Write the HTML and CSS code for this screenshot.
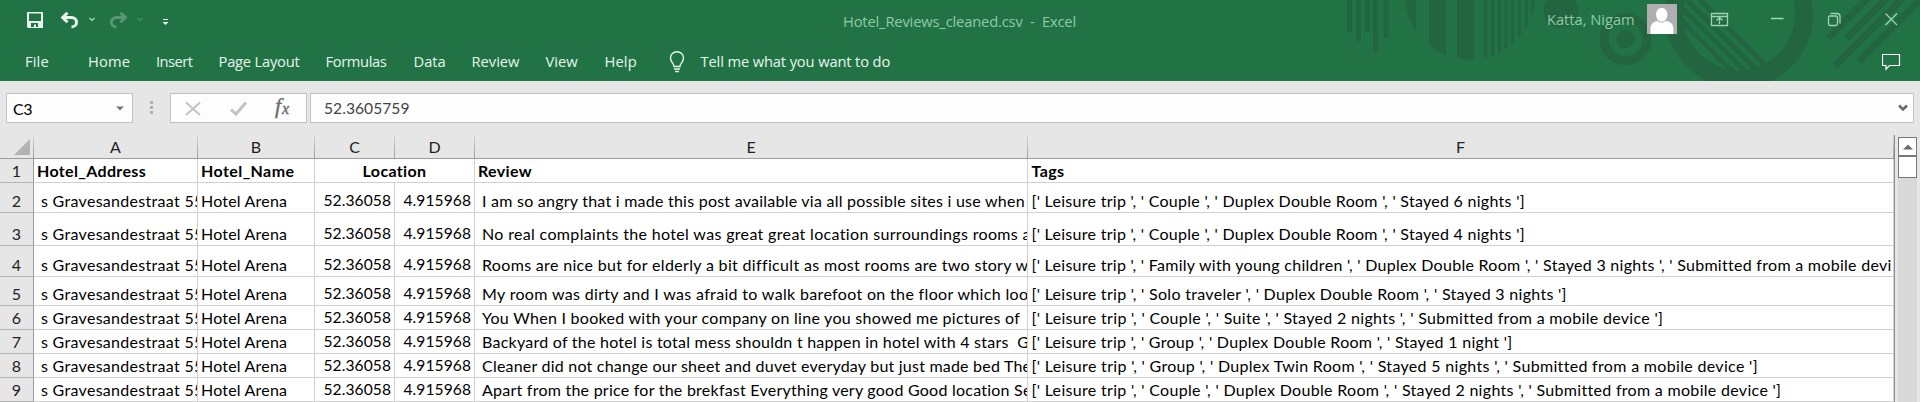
FILE: index.html
```html
<!DOCTYPE html>
<html lang="en">
<head>
<meta charset="utf-8">
<title>Hotel_Reviews_cleaned.csv - Excel</title>
<link rel="stylesheet" href="styles.css">
</head>
<body>
<header class="top">
  <svg class="pattern" width="600" height="81" viewBox="1320 0 600 81">
    <defs>
      <clipPath id="disc"><circle cx="1470" cy="-6" r="65.5"/></clipPath>
      <clipPath id="hole"><circle cx="1739" cy="14" r="57"/></clipPath>
    </defs>
    <path d="M1347 0h5v32h-5zM1356 0h5v41h-5zM1365 0h5v32h-5zM1373 0h5v52h-5zM1383.500 0h5v38h-5z"/>
    <path clip-path="url(#disc)" d="M1400 0h16v60h-16zM1429 0h17v60h-17zM1457 0h17v60h-17zM1484 0h3v60h-3zM1491 0h3v60h-3zM1498 0h3v60h-3zM1504.500 0h3v60h-3zM1511 0h3v60h-3zM1518 0h3v60h-3zM1525 0h3v60h-3zM1531.500 0h3v60h-3z"/>
    <circle cx="1561" cy="10.500" r="17.500"/>
    <circle cx="1625.500" cy="39" r="9"/>
    <circle class="ring" cx="1625.500" cy="39" r="21.500" stroke-width="9"/>
    <circle class="ring" cx="1739" cy="14" r="65" stroke-width="18"/>
    <path class="ring" clip-path="url(#hole)" stroke-width="5" d="M1661 0l90 90M1674 0l90 90M1687 0l90 90M1700 0l90 90"/>
    <path class="ring" stroke-width="7" d="M1828 38l40-40M1847 38l40-40M1835 66l68-68M1859 61l63-63"/>
  </svg>
  <div class="titlebar">
    <div class="quick">
      <svg width="150" height="20" viewBox="26 10 150 20">
        <path class="w" fill-rule="evenodd" d="M27 12h16v16H28l-1-1zM29 13.500v7.500h12v-7.500zM31 23v4h3v-2.500h2V27h2v-4z"/>
        <path class="wl" d="M63 17.500h8.500a5 4.700 0 0 1 0 9.400M67.500 12.800L62.700 17.500l4.800 4.700"/>
        <path class="thin" d="M89.500 18l2.500 2.500 2.500-2.500"/>
        <g class="dim"><path class="wl" d="M125 17.500h-8.500a5 4.700 0 0 0 0 9.400M120.500 12.800l4.800 4.700-4.800 4.700"/>
        <path class="thin" d="M137.500 18l2.500 2.500 2.500-2.500"/></g>
        <path class="w" d="M163 19h5v1h-5zM162.500 22h6l-3 3z"/>
      </svg>
    </div>
    <div class="title">Hotel_Reviews_cleaned.csv&nbsp; -&nbsp; Excel</div>
    <div class="user">Katta, Nigam</div>
    <svg class="avatar" width="30" height="30" viewBox="0 0 30 30"><path fill="#b0aeb0" d="M0 0h30v30H0z"/><path fill="#fff" d="M3.500 30v-5c0-5 3-7.500 7-8 2.500 2 5.500 2 8 0 5 .5 8 3 8 8v5z"/><ellipse cx="14.700" cy="10.700" rx="5.700" ry="7" fill="#fff"/></svg>
    <svg class="window" width="190" height="18" viewBox="1710 10 190 18">
      <path d="M1711.500 13.500h16v12h-16zM1711.500 16.500h16M1719.500 24v-6M1716.500 20.500l3-3 3 3M1771 18.500h12.500"/>
      <rect x="1828.500" y="16" width="9" height="9.500" rx="1.500"/><path d="M1830.500 13.500h6.500q3 0 3 3v7M1885.500 13.500l11.500 11.500M1897 13.500l-11.500 11.500"/>
    </svg>
  </div>
  <nav class="tabs">
    <span class="t-file">File</span><span class="t-home">Home</span><span class="t-insert">Insert</span><span class="t-page">Page Layout</span><span class="t-form">Formulas</span><span>Data</span><span>Review</span><span>View</span><span class="t-help">Help</span>
    <svg width="16" height="22" viewBox="0 0 16 22"><path d="M5 15.500c0-3-3.500-4.500-3.500-8.500a6.500 6.200 0 0 1 13 0c0 4-3.500 5.500-3.500 8.500zM5 18h6M6 20.500h4"/></svg>
    <span class="t-tell">Tell me what you want to do</span>
    <svg class="comment" width="19" height="18" viewBox="0 0 19 18"><path d="M.5 1.500h17v11h-10l-3.500 3.700v-3.700H.5z"/></svg>
  </nav>
</header>

<section class="formula">
  <div class="namebox"><span>C3</span><svg width="8" height="5" viewBox="0 0 8 5"><path fill="#777" d="M0 .5h8L4 4.500z"/></svg></div>
  <div class="dots"><i></i><i></i><i></i></div>
  <div class="fx">
    <svg width="135" height="28" viewBox="0 0 135 28">
      <path fill="none" stroke="#c3c3c3" stroke-width="2" d="M15 8.500l14 12.500M29 8.500L15 21"/>
      <path fill="none" stroke="#c3c3c3" stroke-width="3" d="M60 15.500l5 4.500 10-11.500"/>
      <text x="104" y="19" class="f">f</text><text x="111" y="20" class="x">x</text>
    </svg>
  </div>
  <div class="value"><span>52.3605759</span><svg width="10" height="8" viewBox="0 0 10 8"><path fill="none" stroke="#6a6a6a" stroke-width="2.600" d="M1 1.500l4 4 4-4"/></svg></div>
</section>

<main class="sheet">
  <div class="grid">
    <div class="row heads"><div class="n"><svg width="16" height="16" viewBox="0 0 16 16"><path fill="#b3b3b3" d="M16 0v16H0z"/></svg></div><div>A</div><div>B</div><div>C</div><div>D</div><div>E</div><div>F</div></div>
    <div class="row r1"><div class="n">1</div><div class="a">Hotel_Address</div><div class="b">Hotel_Name</div><div class="loc">Location</div><div class="e">Review</div><div class="f">Tags</div></div>
    <div class="row r2"><div class="n">2</div><div class="a">s Gravesandestraat 55</div><div class="b">Hotel Arena</div><div class="num">52.36058</div><div class="num">4.915968</div><div class="e">I am so angry that i made this post available via all possible sites i use when</div><div class="f">[' Leisure trip ', ' Couple ', ' Duplex Double Room ', ' Stayed 6 nights ']</div></div>
    <div class="row r3"><div class="n">3</div><div class="a">s Gravesandestraat 55</div><div class="b">Hotel Arena</div><div class="num">52.36058</div><div class="num">4.915968</div><div class="e">No real complaints the hotel was great great location surroundings rooms a</div><div class="f">[' Leisure trip ', ' Couple ', ' Duplex Double Room ', ' Stayed 4 nights ']</div></div>
    <div class="row r4"><div class="n">4</div><div class="a">s Gravesandestraat 55</div><div class="b">Hotel Arena</div><div class="num">52.36058</div><div class="num">4.915968</div><div class="e">Rooms are nice but for elderly a bit difficult as most rooms are two story w</div><div class="f">[' Leisure trip ', ' Family with young children ', ' Duplex Double Room ', ' Stayed 3 nights ', ' Submitted from a mobile devi</div></div>
    <div class="row r5"><div class="n">5</div><div class="a">s Gravesandestraat 55</div><div class="b">Hotel Arena</div><div class="num">52.36058</div><div class="num">4.915968</div><div class="e">My room was dirty and I was afraid to walk barefoot on the floor which loo</div><div class="f">[' Leisure trip ', ' Solo traveler ', ' Duplex Double Room ', ' Stayed 3 nights ']</div></div>
    <div class="row r6"><div class="n">6</div><div class="a">s Gravesandestraat 55</div><div class="b">Hotel Arena</div><div class="num">52.36058</div><div class="num">4.915968</div><div class="e">You When I booked with your company on line you showed me pictures of</div><div class="f">[' Leisure trip ', ' Couple ', ' Suite ', ' Stayed 2 nights ', ' Submitted from a mobile device ']</div></div>
    <div class="row r7"><div class="n">7</div><div class="a">s Gravesandestraat 55</div><div class="b">Hotel Arena</div><div class="num">52.36058</div><div class="num">4.915968</div><div class="e">Backyard of the hotel is total mess shouldn t happen in hotel with 4 stars&nbsp; G</div><div class="f">[' Leisure trip ', ' Group ', ' Duplex Double Room ', ' Stayed 1 night ']</div></div>
    <div class="row r8"><div class="n">8</div><div class="a">s Gravesandestraat 55</div><div class="b">Hotel Arena</div><div class="num">52.36058</div><div class="num">4.915968</div><div class="e">Cleaner did not change our sheet and duvet everyday but just made bed The</div><div class="f">[' Leisure trip ', ' Group ', ' Duplex Twin Room ', ' Stayed 5 nights ', ' Submitted from a mobile device ']</div></div>
    <div class="row r9"><div class="n">9</div><div class="a">s Gravesandestraat 55</div><div class="b">Hotel Arena</div><div class="num">52.36058</div><div class="num">4.915968</div><div class="e">Apart from the price for the brekfast Everything very good Good location Se</div><div class="f">[' Leisure trip ', ' Couple ', ' Duplex Double Room ', ' Stayed 2 nights ', ' Submitted from a mobile device ']</div></div>
  </div>
  <div class="scroll"><div class="up"><svg width="10" height="6" viewBox="0 0 10 6"><path fill="#6a6a6a" d="M0 5.500h10L5 .5z"/></svg></div><div class="thumb"></div><div class="track"></div></div>
</main>
</body>
</html>
```
FILE: styles.css
```css
* { box-sizing: border-box; }
body { margin: 0; width: 1920px; height: 402px; overflow: hidden; background: #e6e6e6; font: 16px/19px Lato, "Liberation Sans", sans-serif; color: #000; }
svg { display: block; flex: none; }

.top { position: relative; height: 81px; background: #217346; font: 14.7px/20px "Open Sans", "Noto Sans", sans-serif; }
.pattern { position: absolute; right: 0; top: 0; fill: #236540; }
.pattern .ring { fill: none; stroke: #236540; }

.titlebar { position: relative; height: 40px; display: flex; align-items: flex-start; color: #90c9a6; white-space: nowrap; }
.quick { width: 843px; padding: 10px 0 0 26px; }
.w { fill: #e9f6ee; }
.wl { fill: none; stroke: #e9f6ee; stroke-width: 3; }
.thin { fill: none; stroke: #b5dcc4; stroke-width: 1.2; }
.dim { opacity: .28; }
.title { width: 704px; padding-top: 11px; letter-spacing: -.147px; }
.user { width: 100px; padding-top: 9px; letter-spacing: -.02px; }
.avatar { margin-top: 4px; }
.window { margin: 10px 0 0 33px; fill: none; stroke: #9fd3b3; stroke-width: 1.3; }

.tabs { position: relative; display: grid; grid-template-columns: 63px 68px 62.500px 107px 88px 58px 74px 59px 64.500px 31.500px 1181px 19px; padding-left: 25px; color: #e8f5ed; white-space: nowrap; }
.tabs span { padding-top: 11px; }
.tabs svg { margin-top: 11px; fill: none; stroke: #e8f5ed; stroke-width: 1.4; }
.tabs .comment { margin-top: 13px; stroke: #fff; stroke-width: 1.2; }
.t-file, .t-home, .t-help { letter-spacing: .13px; }
.t-insert { letter-spacing: -.516px; }
.t-page { letter-spacing: -.209px; }
.t-form { letter-spacing: -.362px; }
.t-tell { letter-spacing: -.13px; }

.formula { height: 54px; padding: 12px 6px 0; display: flex; }
.formula > div { height: 30px; }
.namebox, .fx, .value { background: #fdfdfd; border: 1px solid #c0c2c2; }
.namebox, .value { display: flex; align-items: center; justify-content: space-between; }
.namebox { width: 127px; padding: 0 8px 0 6px; letter-spacing: -.5px; }
.dots { width: 37px; padding: 8px 0 0 17px; display: flex; flex-direction: column; gap: 2px; }
.dots i { width: 3px; height: 3px; background: #b2b2b2; }
.fx { width: 137px; margin-right: 3px; }
.fx text { fill: #6c6c6c; stroke: #6c6c6c; stroke-width: .4; font-family: "Liberation Serif", serif; font-style: italic; }
.fx .f { font-size: 22px; }
.fx .x { font-size: 16px; }
.value { flex: 1; padding: 0 5px 0 13px; color: #444; font-size: 15.6px; letter-spacing: .04px; }

.sheet { display: flex; height: 267px; }
.grid { width: 1895px; border-right: 1px solid #8e8e8e; }
.row { display: grid; grid-template-columns: 34px 164px 117px 80px 80px 553px 866px; background: #fff; height: 24px; }
.row > div { display: flex; align-items: flex-end; white-space: pre; overflow: hidden; padding: 0 0 2px 3px; border-right: 1px solid #d0d0d0; border-bottom: 1px solid #d0d0d0; }
.heads { background: #e6e6e6; }
.row.heads > div { justify-content: center; padding: 0 0 2px; color: #222; border: solid; border-width: 0 1px 1px 0; border-image: linear-gradient(#d8d8d8, #9b9b9b) 1; }
.row.heads > .n { justify-content: flex-end; padding: 0 3px 3px 0; }
.row > .n { justify-content: center; padding: 0 0 2px; background: #e6e6e6; border-right-color: #9b9b9b; border-bottom-color: #b4b4b4; color: #222; }
.row.r2 { height: 30px; }
.row.r3 { height: 33px; }
.row.r4 { height: 31px; }
.row.r5 { height: 29px; }
.r1 { font-weight: bold; }
.r1 > .n { font-weight: normal; }
.row > .loc { grid-column: span 2; justify-content: center; padding-left: 0; letter-spacing: .34px; }
.row > .num { justify-content: flex-end; padding-right: 3px; font-size: 15.6px; letter-spacing: .06px; }
.a { letter-spacing: .3px; }
.row:not(.r1) > .a { padding-left: 7px; }
.b { letter-spacing: .2px; }
.row:not(.r1) > .e { padding-left: 7px; }
.row > .f { padding-left: 3.5px; }
.r1 .a { letter-spacing: .36px; }
.r1 .b { letter-spacing: .43px; }
.r1 .e { letter-spacing: .358px; }
.r1 .f { letter-spacing: .396px; }
.r2 .e { letter-spacing: .239px; }
.r3 .e { letter-spacing: .339px; }
.r4 .e { letter-spacing: .334px; }
.r5 .e { letter-spacing: .336px; }
.r6 .e { letter-spacing: .275px; }
.r7 .e { letter-spacing: .244px; }
.r8 .e { letter-spacing: .216px; }
.r9 .e { letter-spacing: .241px; }
.r2 .f, .r3 .f { letter-spacing: .28px; }
.r4 .f { letter-spacing: .286px; }
.r5 .f { letter-spacing: .3px; }
.r6 .f { letter-spacing: .316px; }
.r7 .f { letter-spacing: .29px; }
.r8 .f { letter-spacing: .322px; }
.r9 .f { letter-spacing: .308px; }

.scroll { width: 19px; margin: 2px 0 0 3px; display: flex; flex-direction: column; }
.up { height: 20px; display: flex; align-items: center; justify-content: center; background: #fff; border: 1px solid #777; border-bottom-width: 2px; }
.thumb { height: 21px; background: #fff; border: 1px solid #777; border-top: 0; }
.track { flex: 1; background: #d9d9d9; }
```
